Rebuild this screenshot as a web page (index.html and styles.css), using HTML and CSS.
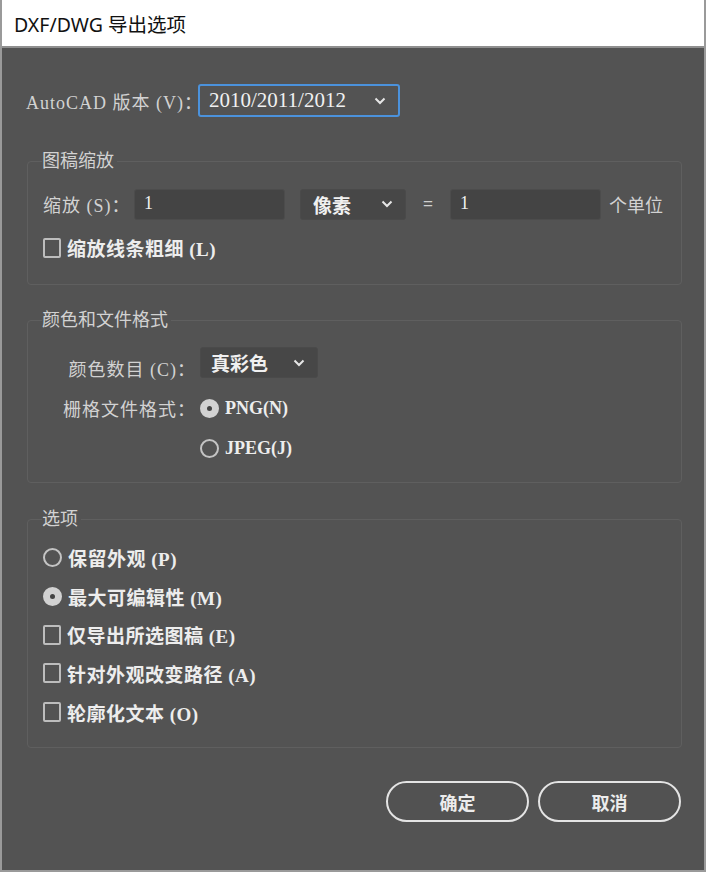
FILE: index.html
```html
<html>
    <head>
        <link rel="stylesheet" href="styles.css">
        <title>DXF/DWG 导出选项</title>
    </head>
    <body>
        <div class="window">
            <div class="titlebar">DXF/DWG 导出选项</div>

            <div class="content">
                <div class="version-row">
                    <span class="label version-label">AutoCAD 版本 (V)：</span>
                    <div class="select select-version">
                        <span>2010/2011/2012</span>
                        <svg class="chevron" width="12" height="8" viewBox="0 0 12 8"><path d="M1.5 1.5 L6 6 L10.5 1.5" fill="none" stroke="#e6e6e6" stroke-width="2"/></svg>
                    </div>
                </div>

                <fieldset class="group group-scale">
                    <legend>图稿缩放</legend>
                    <div class="scale-row">
                        <span class="label scale-label">缩放 (S)：</span>
                        <div class="field field-scale">1</div>
                        <div class="select select-unit">
                            <span>像素</span>
                            <svg class="chevron" width="12" height="8" viewBox="0 0 12 8"><path d="M1.5 1.5 L6 6 L10.5 1.5" fill="none" stroke="#e6e6e6" stroke-width="2"/></svg>
                        </div>
                        <span class="equals">=</span>
                        <div class="field field-scale">1</div>
                        <span class="label unit">个单位</span>
                    </div>
                    <div class="option">
                        <span class="check"></span>
                        <span class="option-text">缩放线条粗细 (L)</span>
                    </div>
                </fieldset>

                <fieldset class="group group-color">
                    <legend>颜色和文件格式</legend>
                    <div class="form-grid">
                        <span class="label grid-label">颜色数目 (C)：</span>
                        <div class="select select-color">
                            <span>真彩色</span>
                            <svg class="chevron" width="12" height="8" viewBox="0 0 12 8"><path d="M1.5 1.5 L6 6 L10.5 1.5" fill="none" stroke="#e6e6e6" stroke-width="2"/></svg>
                        </div>
                        <span class="label grid-label">栅格文件格式：</span>
                        <div class="option option-tight">
                            <span class="radio checked"></span>
                            <span class="option-text latin">PNG(N)</span>
                        </div>
                        <span></span>
                        <div class="option option-tight">
                            <span class="radio"></span>
                            <span class="option-text latin">JPEG(J)</span>
                        </div>
                    </div>
                </fieldset>

                <fieldset class="group group-options">
                    <legend>选项</legend>
                    <div class="option">
                        <span class="radio"></span>
                        <span class="option-text">保留外观 (P)</span>
                    </div>
                    <div class="option">
                        <span class="radio checked"></span>
                        <span class="option-text">最大可编辑性 (M)</span>
                    </div>
                    <div class="option">
                        <span class="check"></span>
                        <span class="option-text">仅导出所选图稿 (E)</span>
                    </div>
                    <div class="option">
                        <span class="check"></span>
                        <span class="option-text">针对外观改变路径 (A)</span>
                    </div>
                    <div class="option">
                        <span class="check"></span>
                        <span class="option-text">轮廓化文本 (O)</span>
                    </div>
                </fieldset>

                <div class="buttons">
                    <button class="btn">确定</button>
                    <button class="btn">取消</button>
                </div>
            </div>
        </div>
    </body>
</html>
```

FILE: styles.css
```css
body {
    margin: 0;
    background-color: #535353;
    font-family: 'Liberation Serif', 'Noto Sans CJK SC', serif;
}

.window {
    width: 706px;
    height: 872px;
    box-sizing: border-box;
    border: 2px solid #9a9a9a;
    border-top: none;
    background-color: #535353;
}

.titlebar {
    height: 46px;
    background-color: #ffffff;
    border-bottom: 2px solid #8f8f8f;
    padding-left: 12px;
    line-height: 50px;
    font-family: 'Noto Sans', 'Noto Sans CJK SC', sans-serif;
    font-size: 19.5px;
    color: #111111;
}

.content {
    padding: 36px 23px 0 24px;
}

.label {
    color: #d2d2d2;
    font-size: 18px;
    letter-spacing: 1px;
    white-space: nowrap;
}

.version-row {
    display: flex;
    align-items: center;
}

.version-label {
    width: 172px;
}

.select {
    display: flex;
    align-items: center;
    justify-content: space-between;
    box-sizing: border-box;
    border: 1px solid #4a4a4a;
    border-radius: 3px;
    background-color: #474747;
    color: #f0f0f0;
    font-size: 19px;
    font-weight: bold;
    padding: 0 12px 0 10px;
}

.select-version {
    width: 202px;
    height: 33px;
    border: 2px solid #4b92dc;
    background-color: #535353;
    font-weight: normal;
    font-size: 21px;
    padding-left: 9px;
}

.group {
    margin: 0 0 0 1px;
    border: 1px solid #5f5f5f;
    border-radius: 4px;
    padding: 2px 15px 0 15px;
    width: 655px;
    box-sizing: border-box;
}

.group legend {
    padding: 0 3px 0 0;
    margin-left: -1px;
    color: #d2d2d2;
    font-size: 18px;
    line-height: 22px;
}

.group-scale {
    margin-top: 33px;
    height: 135px;
}

.group-color {
    margin-top: 24px;
    height: 174px;
    padding-top: 16px;
}

.group-options {
    margin-top: 25px;
    height: 240px;
    padding-top: 8px;
}

.group-options .option {
    height: 38.7px;
}

.scale-row {
    display: flex;
    align-items: center;
    height: 30px;
    margin-top: 15px;
}

.scale-label {
    width: 91px;
}

.field {
    box-sizing: border-box;
    height: 31px;
    background-color: #444444;
    border: 1px solid #4c4c4c;
    border-radius: 3px;
    color: #f0f0f0;
    font-size: 18px;
    padding: 0 9px;
    line-height: 26px;
}

.field-scale {
    width: 151px;
}

.select-unit {
    width: 106px;
    height: 31px;
    margin-left: 15px;
    padding-left: 12px;
}

.equals {
    width: 44px;
    text-align: center;
    color: #cfcfcf;
    font-size: 17px;
    font-family: 'Liberation Sans', sans-serif;
}

.unit {
    margin-left: 8px;
    letter-spacing: 0;
}

.option {
    display: flex;
    align-items: center;
    gap: 6px;
    height: 39px;
}

.group-scale .option {
    margin-top: 9px;
}

.option-text {
    color: #ededed;
    font-size: 19px;
    font-weight: bold;
    letter-spacing: 0.5px;
    white-space: nowrap;
}

.latin {
    letter-spacing: 0;
    font-size: 18px;
}

.check {
    width: 14px;
    height: 16px;
    border: 2px solid #bdbdbd;
    border-radius: 2px;
}

.radio {
    width: 15px;
    height: 15px;
    border: 2px solid #c4c4c4;
    border-radius: 50%;
    position: relative;
}

.radio.checked {
    background-color: #d2d2d2;
    border-color: #d2d2d2;
}

.radio.checked::after {
    content: "";
    position: absolute;
    left: 5px;
    top: 5px;
    width: 5px;
    height: 5px;
    border-radius: 50%;
    background-color: #444444;
}

.form-grid {
    display: grid;
    grid-template-columns: 153px auto;
    column-gap: 4px;
    justify-content: start;
    align-items: center;
}

.grid-label {
    text-align: right;
}

.select-color {
    width: 118px;
    height: 31px;
    margin: 0 0 10px 0;
}

.option-tight {
    height: 40px;
    gap: 6px;
}

.buttons {
    display: flex;
    justify-content: flex-end;
    gap: 9px;
    margin-top: 33px;
    padding-right: 0;
}

.btn {
    width: 143px;
    height: 41px;
    border: 2px solid #e4e4e4;
    border-radius: 21px;
    background-color: #525252;
    color: #ececec;
    font-family: 'Noto Sans CJK SC', sans-serif;
    font-size: 18px;
    font-weight: bold;
    cursor: pointer;
}
```
